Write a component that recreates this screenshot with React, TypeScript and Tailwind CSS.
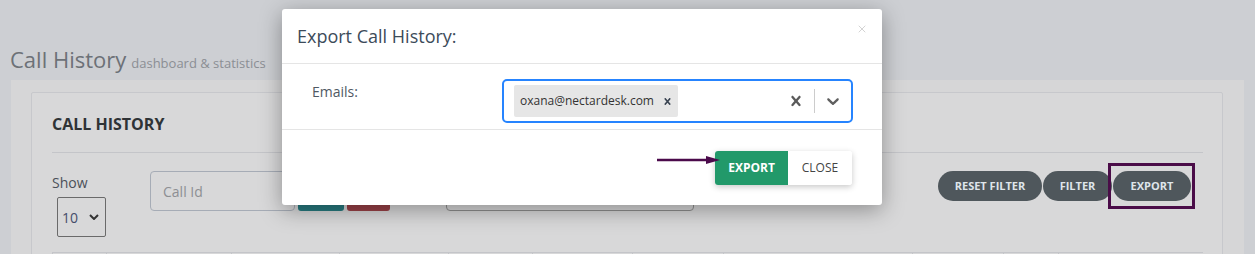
import { X } from 'lucide-react';

const tableCols = [54, 125, 108, 109, 84, 100, 91, 189, 91, 55, 145];

function CrossIcon({ className }: { className?: string }) {
    return (
        <svg viewBox="0 0 20 20" className={className} fill="currentColor">
            <path d="M14.348 14.849c-0.469 0.469-1.229 0.469-1.697 0l-2.651-3.030-2.651 3.029c-0.469 0.469-1.229 0.469-1.697 0-0.469-0.469-0.469-1.229 0-1.697l2.758-3.15-2.759-3.152c-0.469-0.469-0.469-1.228 0-1.697s1.228-0.469 1.697 0l2.652 3.031 2.651-3.031c0.469-0.469 1.228-0.469 1.697 0s0.469 1.229 0 1.697l-2.758 3.152 2.758 3.15c0.469 0.469 0.469 1.229 0 1.698z" />
        </svg>
    );
}

function ChevronIcon({ className }: { className?: string }) {
    return (
        <svg viewBox="0 0 20 20" className={className} fill="currentColor">
            <path d="M4.516 7.548c0.436-0.446 1.043-0.481 1.576 0l3.908 3.747 3.908-3.747c0.533-0.481 1.141-0.446 1.574 0 0.436 0.445 0.408 1.197 0 1.615-0.406 0.418-4.695 4.502-4.695 4.502-0.217 0.223-0.502 0.335-0.787 0.335s-0.57-0.112-0.789-0.335c0 0-4.287-4.084-4.695-4.502s-0.436-1.17 0-1.615z" />
        </svg>
    );
}

export default function App() {
    return (
        <div className="relative h-[254px] w-[1255px] overflow-hidden bg-[#cdcfd3] font-['Open_Sans',sans-serif]">
            {/* Page title */}
            <div className="flex h-[74px] items-baseline pl-[10px] pt-[44px] leading-[30px]">
                <h1 className="text-[22px] font-normal text-[#6c7177]">Call History</h1>
                <span className="ml-[5px] text-[13px] text-[#8b8e93]">dashboard &amp; statistics</span>
            </div>

            {/* Panel */}
            <div className="ml-[11px] mt-[6px] w-[1233px] bg-[#d6d6d7] pl-[20px] pr-[21px] pt-[12px]">
                <div className="rounded-[2px] border border-[#c7c8cc] bg-[#d8d8d9] pl-[20px] pr-[19px] pt-[19px]">
                    <div className="border-b border-[#c4c5c9] pb-[16px]">
                        <h2 className="text-[16px] font-bold leading-[24px] text-[#2f3336]">CALL HISTORY</h2>
                    </div>

                    {/* Filters */}
                    <div className="mt-[18px] flex items-start">
                        <div className="w-[98px]">
                            <div className="pt-[2px] text-[14px] leading-[20px] text-[#4b5058]">Show</div>
                            <div className="ml-[5px] mt-[4px] flex h-[40px] w-[49px] items-center justify-between rounded-[2px] border border-[#6a6a6a] pl-[4px] pr-[6px]">
                                <span className="text-[14px] text-[#454d6b]">10</span>
                                <svg viewBox="0 0 10 6" className="h-[6px] w-[10px]">
                                    <polyline points="1,1 5,5 9,1" fill="none" stroke="#333" strokeWidth="2" />
                                </svg>
                            </div>
                        </div>
                        <div className="flex h-[40px] w-[145px] items-center rounded-[4px] border border-[#a6acb6] pl-[12px] text-[14px] text-[#8d8f93]">
                            Call Id
                        </div>
                        <div className="ml-[3px] h-[40px] w-[46px] rounded-[3px] bg-[#277b80]" />
                        <div className="ml-[3px] h-[40px] w-[43px] rounded-[3px] bg-[#9a4148]" />
                        <div className="ml-[56px] h-[40px] w-[248px] rounded-[4px] border border-[#8f8f8f]" />

                        <div className="ml-auto mr-[12px] flex gap-px">
                            <button className="h-[30px] w-[104px] rounded-full bg-[#4f575c] text-[11px] font-bold text-[#dfe5ea]">RESET FILTER</button>
                            <button className="h-[30px] w-[69px] rounded-full bg-[#4f575c] text-[11px] font-bold text-[#dfe5ea]">FILTER</button>
                            <div className="relative">
                                <button className="h-[30px] w-[78px] rounded-full bg-[#4f575c] text-[11px] font-bold text-[#dfe5ea]">EXPORT</button>
                                <span className="absolute -left-[5px] -top-[8px] h-[46px] w-[87px] border-[3px] border-[#4a0c48]" />
                            </div>
                        </div>
                    </div>

                    {/* Table header top */}
                    <div className="mt-[15px] flex border-t border-[#c4c5c9]">
                        {tableCols.map((w, i) => (
                            <div key={i} style={{ width: w }} className="h-[20px] border-l border-[#c4c5c9]" />
                        ))}
                    </div>
                </div>
            </div>

            {/* Modal */}
            <div className="absolute left-[282px] top-[9px] w-[600px] rounded-[3px] bg-white shadow-[0_5px_22px_rgba(0,0,0,0.35)]">
                <div className="relative flex h-[55px] items-center border-b border-[#e5e5e5] px-[15px]">
                    <h3 className="text-[18px] leading-[25px] text-[#3c4b5a]">Export Call History:</h3>
                    <X className="absolute right-[14px] top-[14px] text-[#c4c4c4]" size={12} strokeWidth={1.5} />
                </div>

                <div className="flex h-[66px] border-b border-[#e5e5e5] pl-[30px] pr-[29px] pt-[15px]">
                    <div className="w-[190px] pt-[3px] text-[14px] leading-[20px] text-[#4f5963]">Emails:</div>
                    <div className="flex h-[44px] flex-1 items-center rounded-[5px] border-2 border-[#2684ff] pl-[10px]">
                        <div className="flex h-[32px] w-[164px] items-center rounded-[2px] bg-[#e6e6e6]">
                            <span className="pl-[6px] text-[12px] text-[#333]">oxana@nectardesk.com</span>
                            <span className="ml-auto flex w-[20px] justify-center pr-[2px]">
                                <CrossIcon className="h-[13px] w-[13px] text-[#3a4452]" />
                            </span>
                        </div>
                        <div className="ml-auto flex items-center">
                            <div className="px-[8px]">
                                <CrossIcon className="h-[20px] w-[20px] text-[#5a5a5a]" />
                            </div>
                            <div className="h-[24px] w-px bg-[#cccccc]" />
                            <div className="px-[8px]">
                                <ChevronIcon className="h-[20px] w-[20px] text-[#5f5f5f]" />
                            </div>
                        </div>
                    </div>
                </div>

                <div className="relative flex h-[75px] justify-end pr-[30px] pt-[21px]">
                    <div className="flex h-[34px] rounded-[3px] shadow-[0_2px_6px_rgba(0,0,0,0.22)]">
                        <button className="w-[73px] rounded-l-[3px] bg-[#22996a] text-[12px] font-bold text-white">EXPORT</button>
                        <button className="w-[64px] rounded-r-[3px] bg-white text-[12px] text-[#444]">CLOSE</button>
                    </div>
                    <svg viewBox="0 0 64 10" className="absolute left-[375px] top-[25px] h-[10px] w-[64px]">
                        <line x1="0" y1="5" x2="52" y2="5" stroke="#4b0a4b" strokeWidth="2.5" />
                        <polygon points="49,1 63,5 49,9" fill="#4b0a4b" />
                    </svg>
                </div>
            </div>
        </div>
    );
}
